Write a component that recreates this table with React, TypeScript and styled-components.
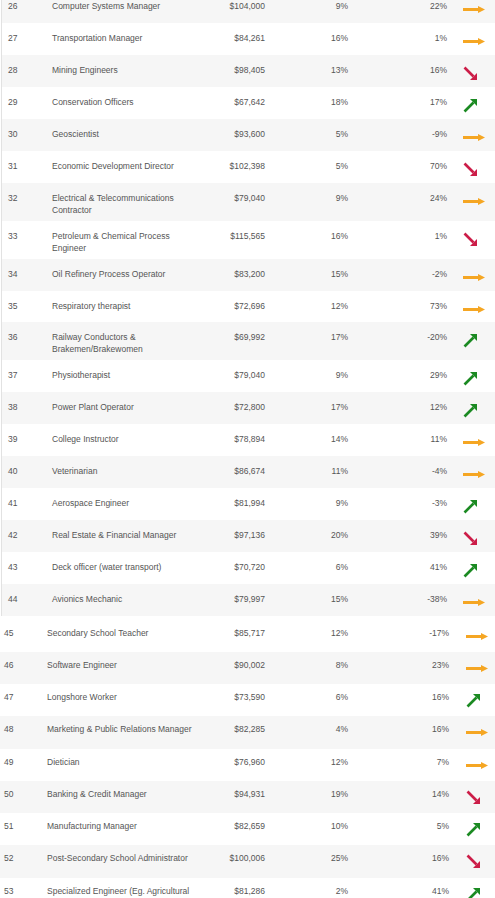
import React from "react";
import styled, { createGlobalStyle } from "styled-components";

const Global = createGlobalStyle`
  html, body { margin: 0; padding: 0; background: #ffffff; }
  body { overflow: hidden; }
`;

type Trend = "flat" | "up" | "down";
type Item = [number, string, string, string, string, Trend];

const topRows: Item[] = [
  [26, "Computer Systems Manager", "$104,000", "9%", "22%", "flat"],
  [27, "Transportation Manager", "$84,261", "16%", "1%", "flat"],
  [28, "Mining Engineers", "$98,405", "13%", "16%", "down"],
  [29, "Conservation Officers", "$67,642", "18%", "17%", "up"],
  [30, "Geoscientist", "$93,600", "5%", "-9%", "flat"],
  [31, "Economic Development Director", "$102,398", "5%", "70%", "down"],
  [32, "Electrical & Telecommunications Contractor", "$79,040", "9%", "24%", "flat"],
  [33, "Petroleum & Chemical Process Engineer", "$115,565", "16%", "1%", "down"],
  [34, "Oil Refinery Process Operator", "$83,200", "15%", "-2%", "flat"],
  [35, "Respiratory therapist", "$72,696", "12%", "73%", "flat"],
  [36, "Railway Conductors & Brakemen/Brakewomen", "$69,992", "17%", "-20%", "up"],
  [37, "Physiotherapist", "$79,040", "9%", "29%", "up"],
  [38, "Power Plant Operator", "$72,800", "17%", "12%", "up"],
  [39, "College Instructor", "$78,894", "14%", "11%", "flat"],
  [40, "Veterinarian", "$86,674", "11%", "-4%", "flat"],
  [41, "Aerospace Engineer", "$81,994", "9%", "-3%", "up"],
  [42, "Real Estate & Financial Manager", "$97,136", "20%", "39%", "down"],
  [43, "Deck officer (water transport)", "$70,720", "6%", "41%", "up"],
  [44, "Avionics Mechanic", "$79,997", "15%", "-38%", "flat"],
];

const bottomRows: Item[] = [
  [45, "Secondary School Teacher", "$85,717", "12%", "-17%", "flat"],
  [46, "Software Engineer", "$90,002", "8%", "23%", "flat"],
  [47, "Longshore Worker", "$73,590", "6%", "16%", "up"],
  [48, "Marketing & Public Relations Manager", "$82,285", "4%", "16%", "flat"],
  [49, "Dietician", "$76,960", "12%", "7%", "flat"],
  [50, "Banking & Credit Manager", "$94,931", "19%", "14%", "down"],
  [51, "Manufacturing Manager", "$82,659", "10%", "5%", "up"],
  [52, "Post-Secondary School Administrator", "$100,006", "25%", "16%", "down"],
  [53, "Specialized Engineer (Eg. Agricultural", "$81,286", "2%", "41%", "up"],
];

const Page = styled.div`
  width: 495px;
  overflow: hidden;
  font-family: "Liberation Sans", Arial, sans-serif;
  font-size: 8.5px;
  color: #555555;
`;

const TopTable = styled.div`
  margin-top: -9px;
  margin-left: 1px;
  border-left: 1px solid #e2e2e2;
`;

const BottomTable = styled.div`
  margin-top: 3.6px;
`;

const Row = styled.div<{ $cols: string; $minH: number; $pt: number; $gray: boolean }>`
  display: grid;
  grid-template-columns: ${(p) => p.$cols};
  box-sizing: border-box;
  min-height: ${(p) => p.$minH}px;
  padding-top: ${(p) => p.$pt}px;
  padding-bottom: 5px;
  background: ${(p) => (p.$gray ? "#f6f6f6" : "#ffffff")};
  line-height: 12px;
`;

const Cell = styled.div<{ $align?: "left" | "right"; $pl?: number; $pr?: number }>`
  text-align: ${(p) => p.$align || "left"};
  padding-left: ${(p) => p.$pl || 0}px;
  padding-right: ${(p) => p.$pr || 0}px;
`;

const ArrowSvg = styled.svg`
  display: block;
  margin-top: 2px;
`;

const Arrow: React.FC<{ t: Trend }> = ({ t }) => {
  if (t === "flat") {
    return (
      <ArrowSvg width="24" height="14" viewBox="0 0 24 14">
        <line x1="1" y1="7.5" x2="17" y2="7.5" stroke="#f5a623" strokeWidth="3" />
        <polygon points="16,4 23,7.5 16,11" fill="#f5a623" />
      </ArrowSvg>
    );
  }
  if (t === "down") {
    return (
      <ArrowSvg width="18" height="16" viewBox="0 0 18 16">
        <line x1="2.5" y1="1.5" x2="11.5" y2="10.5" stroke="#cc1d48" strokeWidth="2.6" />
        <polygon points="15,14 8,14 15,7" fill="#cc1d48" />
      </ArrowSvg>
    );
  }
  return (
    <ArrowSvg width="18" height="16" viewBox="0 0 18 16">
      <line x1="2.5" y1="13.5" x2="11.5" y2="4.5" stroke="#1b8a22" strokeWidth="2.6" />
      <polygon points="15,1 8,1 15,8" fill="#1b8a22" />
    </ArrowSvg>
  );
};

type Layout = {
  cols: string;
  minH: number;
  pt: number;
  rankPl: number;
  arrowPl: number;
};

const topLayout: Layout = {
  cols: "50px 138px 75px 83px 99px 1fr",
  minH: 31.9,
  pt: 9,
  rankPl: 6,
  arrowPl: 15,
};

const bottomLayout: Layout = {
  cols: "47px 153px 65px 83px 101px 1fr",
  minH: 32.25,
  pt: 7,
  rankPl: 4,
  arrowPl: 16,
};

const DataRow: React.FC<{ item: Item; layout: Layout; gray: boolean }> = ({ item, layout, gray }) => {
  const [rank, name, salary, pct, growth, trend] = item;
  return (
    <Row $cols={layout.cols} $minH={layout.minH} $pt={layout.pt} $gray={gray}>
      <Cell $pl={layout.rankPl}>{rank}</Cell>
      <Cell $pr={4}>{name}</Cell>
      <Cell $align="right">{salary}</Cell>
      <Cell $align="right">{pct}</Cell>
      <Cell $align="right">{growth}</Cell>
      <Cell $pl={layout.arrowPl}>
        <Arrow t={trend} />
      </Cell>
    </Row>
  );
};

export default function App() {
  return (
    <Page>
      <Global />
      <TopTable>
        {topRows.map((r, i) => (
          <DataRow key={r[0]} item={r} layout={topLayout} gray={i % 2 === 0} />
        ))}
      </TopTable>
      <BottomTable>
        {bottomRows.map((r, i) => (
          <DataRow key={r[0]} item={r} layout={bottomLayout} gray={i % 2 === 1} />
        ))}
      </BottomTable>
    </Page>
  );
}
